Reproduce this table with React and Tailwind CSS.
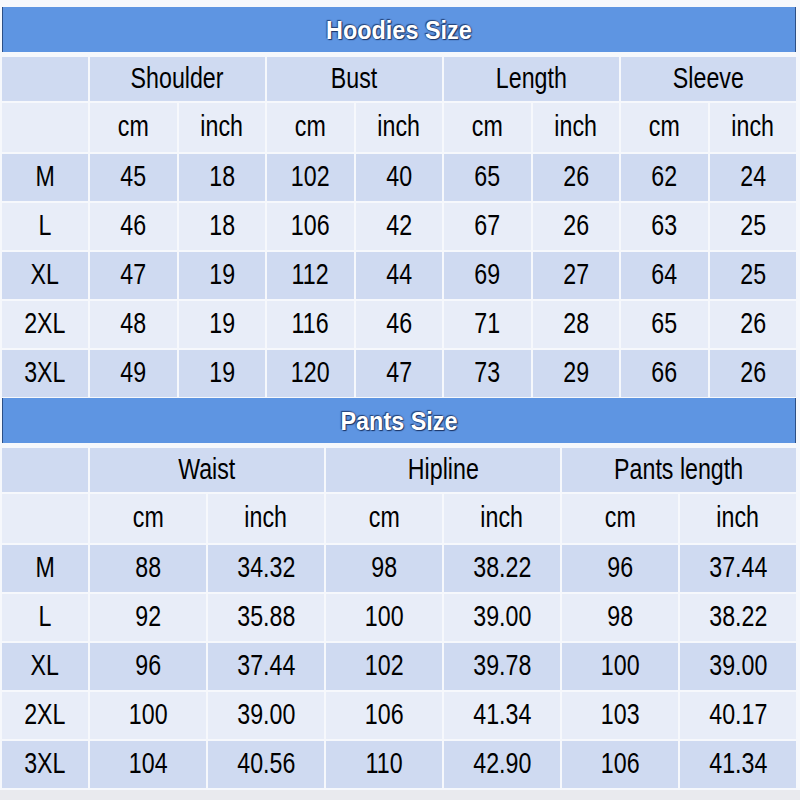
import React from "react";

const hoodies = [
  ["M", "45", "18", "102", "40", "65", "26", "62", "24"],
  ["L", "46", "18", "106", "42", "67", "26", "63", "25"],
  ["XL", "47", "19", "112", "44", "69", "27", "64", "25"],
  ["2XL", "48", "19", "116", "46", "71", "28", "65", "26"],
  ["3XL", "49", "19", "120", "47", "73", "29", "66", "26"],
];

const pants = [
  ["M", "88", "34.32", "98", "38.22", "96", "37.44"],
  ["L", "92", "35.88", "100", "39.00", "98", "38.22"],
  ["XL", "96", "37.44", "102", "39.78", "100", "39.00"],
  ["2XL", "100", "39.00", "106", "41.34", "103", "40.17"],
  ["3XL", "104", "40.56", "110", "42.90", "106", "41.34"],
];

const Cell = ({ children, className = "" }) => (
  <div className={`flex items-center justify-center pb-[2px] ${className}`}>
    <span className="inline-block scale-x-80 text-[29px] leading-none text-black">{children}</span>
  </div>
);

const Title = ({ children }) => (
  <div className="h-[45px] flex items-center justify-center bg-[#5e95e2] border-x border-[#2c4f86]">
    <span className="inline-block scale-x-90 text-[26px] font-bold text-white leading-none [text-shadow:0_0_2px_#1c3566,1px_1px_1px_#1c3566,-1px_-1px_1px_#2a4a80]">
      {children}
    </span>
  </div>
);

const DARK = "bg-[#cfdaf1]";
const LIGHT = "bg-[#e8edf8]";

const SizeTable = ({ title, groups, rows, cols, marginTop }) => (
  <div className={marginTop}>
    <Title>{title}</Title>
    <div className={`mt-[5px] grid ${cols} gap-[2px]`}>
      {/* group header */}
      <div className={`h-[44px] ${DARK}`} />
      {groups.map((g) => (
        <Cell key={g} className={`h-[44px] col-span-2 ${DARK}`}>{g}</Cell>
      ))}
      {/* units row */}
      <div className={`h-[49px] ${LIGHT}`} />
      {groups.map((g) => (
        <React.Fragment key={g}>
          <Cell className={`h-[49px] ${LIGHT}`}>cm</Cell>
          <Cell className={`h-[49px] ${LIGHT}`}>inch</Cell>
        </React.Fragment>
      ))}
      {rows.map((r, i) =>
        r.map((v, j) => (
          <Cell key={`${i}-${j}`} className={`h-[47px] ${i % 2 === 0 ? DARK : LIGHT}`}>
            {v}
          </Cell>
        ))
      )}
    </div>
  </div>
);

export default function App() {
  return (
    <div
      className="w-[800px] h-[800px] bg-[#f6f8fc] flex flex-col overflow-hidden"
      style={{ fontFamily: '"Liberation Sans", Arial, sans-serif' }}
    >
      <div className="ml-[2px] w-[794px] pt-[7px]">
        <SizeTable
          title="Hoodies Size"
          groups={["Shoulder", "Bust", "Length", "Sleeve"]}
          rows={hoodies}
          cols="grid-cols-[86px_repeat(8,1fr)]"
        />
        <SizeTable
          title="Pants Size"
          groups={["Waist", "Hipline", "Pants length"]}
          rows={pants}
          cols="grid-cols-[86px_repeat(6,1fr)]"
          marginTop="mt-[1px]"
        />
      </div>
      <div className="flex-1 mt-[2px] bg-[#e9eaee]" />
    </div>
  );
}
